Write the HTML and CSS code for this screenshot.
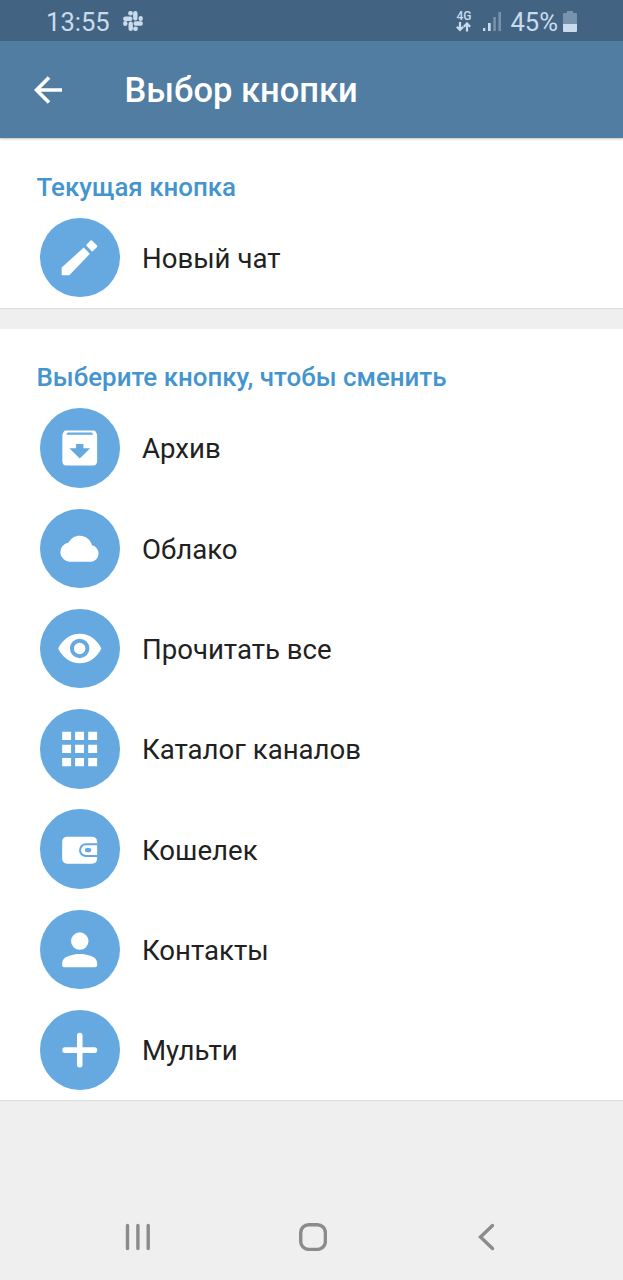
FILE: index.html
```html
<!DOCTYPE html>
<html lang="ru">
<head>
    <meta charset="UTF-8">
    <title>Выбор кнопки</title>
    <link rel="stylesheet" href="styles.css">
</head>
<body>
    <div class="status-bar">
        <span class="time">13:55</span>
        <svg class="slack" viewBox="0 0 20 20">
            <path d="M12.300 2.300v5M2.300 7.700h5M12.700 12.500h5M7.700 12.700v5"/>
            <path d="M7.300 2.300h.4M17.700 7.300v.4M2.300 12.300v.4M12.300 17.700h.4"/>
        </svg>
        <div class="status-right">
            <div class="network">
                <span>4G</span>
                <svg viewBox="0 0 15 10" fill="none" stroke-width="2.2">
                    <path d="M4 0v8M.8 4.800L4 8l3.200-3.200M11 9.500V1.500M7.800 4.700L11 1.500l3.200 3.200"/>
                </svg>
            </div>
            <svg class="signal" viewBox="0 0 18 20">
                <path d="M0 16h2.300v3H0zM5 11h2.700v8H5z"/>
                <path class="dim" d="M10.300 5h2.500v14h-2.500zM15.400 0H18v19h-2.600z"/>
            </svg>
            <span class="percent">45%</span>
            <svg class="battery" viewBox="0 0 14 21">
                <path class="dim" d="M4 0h6v2h3q1 0 1 1v10H0V3q0-1 1-1h3z"/>
                <path d="M0 13h14v7q0 1-1 1H1q-1 0-1-1z"/>
            </svg>
        </div>
    </div>

    <div class="header">
        <svg class="back" viewBox="0 0 28 28">
            <path d="M28 14H2.500M15 1.500L2.500 14 15 26.500"/>
        </svg>
        <h1>Выбор кнопки</h1>
    </div>

    <div class="section current">
        <h2>Текущая кнопка</h2>
        <div class="row">
            <svg class="icon" viewBox="0 0 80 80">
                <path d="M21.800 57.600v-7.800L44 29.800l6.200 6.200L29.500 57.600zM46.300 27.400l4.200-4.400q1-1 2 0l4.700 4.500q1 1 0 2L52.500 34z"/>
            </svg>
            <span>Новый чат</span>
        </div>
    </div>

    <div class="section choose">
        <h2>Выберите кнопку, чтобы сменить</h2>
        <div class="row">
            <svg class="icon" viewBox="0 0 80 80">
                <path fill-rule="evenodd" d="M26 22.700h28q1.500 0 2.300 1.500l.7 1.500q.5 1 .5 2V53.500q0 4.300-4.300 4.300H26.800q-4.300 0-4.300-4.300V27.700q0-1 .5-2l.7-1.500q.8-1.500 2.300-1.500zM27.800 24.600l-1.300 2.300h27L52.200 24.600zM36.300 36.300v4.200h-6.800L40 50.800l10.500-10.300h-6.800v-4.200z"/>
            </svg>
            <span>Архив</span>
        </div>
        <div class="row">
            <svg class="icon" viewBox="0 0 80 80">
                <path d="M30 53a9.700 9.700 0 0 1-1.200-19.300C31 29.700 35 27 40 27c6 0 11 4 12.300 9.600A8.300 8.300 0 0 1 51.500 53z"/>
            </svg>
            <span>Облако</span>
        </div>
        <div class="row">
            <svg class="icon" viewBox="0 0 80 80">
                <path d="M18.300 39.700C22.500 31 30.500 25 40 25s17.500 6 21.700 14.700C57.500 48.500 49.500 54.700 40 54.700S22.500 48.500 18.300 39.700z"/>
                <circle class="pupil" cx="39.900" cy="39.700" r="7.800"/>
            </svg>
            <span>Прочитать все</span>
        </div>
        <div class="row">
            <svg class="icon" viewBox="0 0 80 80">
                <path d="M22.300 23h9v8.300h-9zM35.300 23h9v8.300h-9zM48.500 23h9v8.300h-9zM22.300 36h9v8.300h-9zM35.300 36h9v8.300h-9zM48.500 36h9v8.300h-9zM22.300 49.300h9v8.300h-9zM35.300 49.300h9v8.300h-9zM48.500 49.300h9v8.300h-9z"/>
            </svg>
            <span>Каталог каналов</span>
        </div>
        <div class="row">
            <svg class="icon" viewBox="0 0 80 80">
                <rect x="22.300" y="27.800" width="35.200" height="27.200" rx="5"/>
                <path class="clasp" d="M58 35.500H46.200a5.900 5.900 0 0 0 0 11.800H58"/>
                <rect class="lock" x="45.200" y="39.300" width="6.300" height="4.200" rx="2"/>
            </svg>
            <span>Кошелек</span>
        </div>
        <div class="row">
            <svg class="icon" viewBox="0 0 80 80">
                <circle cx="40" cy="31.300" r="8.800"/>
                <path d="M22.300 55.500v-2.200C22.300 47 33 44.400 40 44.400s17.500 2.600 17.500 8.900v2.200q0 2-2 2H24.300q-2 0-2-2z"/>
            </svg>
            <span>Контакты</span>
        </div>
        <div class="row">
            <svg class="icon" viewBox="0 0 80 80">
                <path class="plus" d="M40 25.800v29.200M25.200 40.400h29.600"/>
            </svg>
            <span>Мульти</span>
        </div>
    </div>

    <div class="nav-bar">
        <svg viewBox="0 0 28 28"><path d="M2.500 2.500v23M12.900 2.500v23M23.200 2.500v23"/></svg>
        <svg viewBox="0 0 28 28"><rect x="1.700" y="1.700" width="24.700" height="24.700" rx="8"/></svg>
        <svg viewBox="0 0 28 28"><path d="M19.500 2.500L7.500 14l12 11.500"/></svg>
    </div>
</body>
</html>
```

FILE: styles.css
```css
body {
    margin: 0;
    min-height: 1280px;
    display: flex;
    flex-direction: column;
    background-color: #efefef;
    font-family: Roboto, sans-serif;
    color: #212121;
}
svg {
    display: block;
    flex-shrink: 0;
}
.status-bar {
    display: flex;
    align-items: center;
    height: 41px;
    box-sizing: border-box;
    padding: 2px 46px 0 46px;
    background-color: #426482;
    color: #c9dbed;
    fill: #c9dbed;
    stroke: none;
}
.time,
.percent {
    font-size: 25.6px;
    line-height: 38px;
}
.slack {
    width: 20px;
    height: 20px;
    margin: -2px 0 0 13px;
    stroke: #c9dbed;
    stroke-width: 4.4;
    stroke-linecap: round;
}
.status-right {
    display: flex;
    align-items: center;
    margin-left: auto;
}
.network {
    width: 16px;
    font-size: 12px;
    line-height: 11px;
    font-weight: 500;
}
.network span {
    display: block;
}
.network svg {
    width: 15px;
    height: 10px;
    stroke: #c9dbed;
}
.signal {
    width: 18px;
    height: 20px;
    margin: 0 9px 0 11px;
}
.battery {
    width: 14px;
    height: 21px;
    margin: -1px 0 0 5px;
}
.dim {
    fill: #7893ac;
}
.header {
    position: relative;
    display: flex;
    align-items: center;
    height: 97px;
    padding-left: 34px;
    background-color: #517da2;
    box-shadow: 0 1px 2px rgba(0,0,0,0.25);
}
.back {
    width: 28px;
    height: 28px;
    fill: none;
    stroke: #fff;
    stroke-width: 3.6;
}
.header h1 {
    margin: 0 0 0 62.500px;
    font-size: 34.5px;
    line-height: 40px;
    font-weight: 500;
    color: #fff;
}
.section {
    background-color: #fff;
    border-bottom: 1px solid #dcdcdc;
    box-sizing: border-box;
    padding: 33px 40px 0;
}
.current {
    height: 171px;
    margin-bottom: 20px;
}
.choose {
    height: 772px;
    padding-top: 32.4px;
}
.section h2 {
    margin: 0 0 4.500px -3.500px;
    font-size: 25.9px;
    line-height: 32px;
    font-weight: 500;
    color: #4495cf;
}
.row {
    display: flex;
    align-items: center;
    height: 100.3px;
    gap: 22.500px;
    font-size: 27.6px;
}
.row span {
    padding-top: 1.600px;
}
.icon {
    width: 79.5px;
    height: 79.5px;
    border-radius: 50%;
    background-color: #65a9e0;
    fill: #fff;
}
.pupil {
    stroke: #65a9e0;
    stroke-width: 4;
}
.clasp {
    fill: none;
    stroke: #65a9e0;
    stroke-width: 2.1;
}
.lock {
    fill: #65a9e0;
}
.plus {
    fill: none;
    stroke: #fff;
    stroke-width: 5.6;
    stroke-linecap: round;
}
.nav-bar {
    display: flex;
    justify-content: space-between;
    margin-top: auto;
    padding: 0 122px 29px 124.500px;
}
.nav-bar svg {
    width: 28px;
    height: 28px;
    fill: none;
    stroke: #8b8b8b;
    stroke-width: 3.4;
    stroke-linecap: round;
}
```
